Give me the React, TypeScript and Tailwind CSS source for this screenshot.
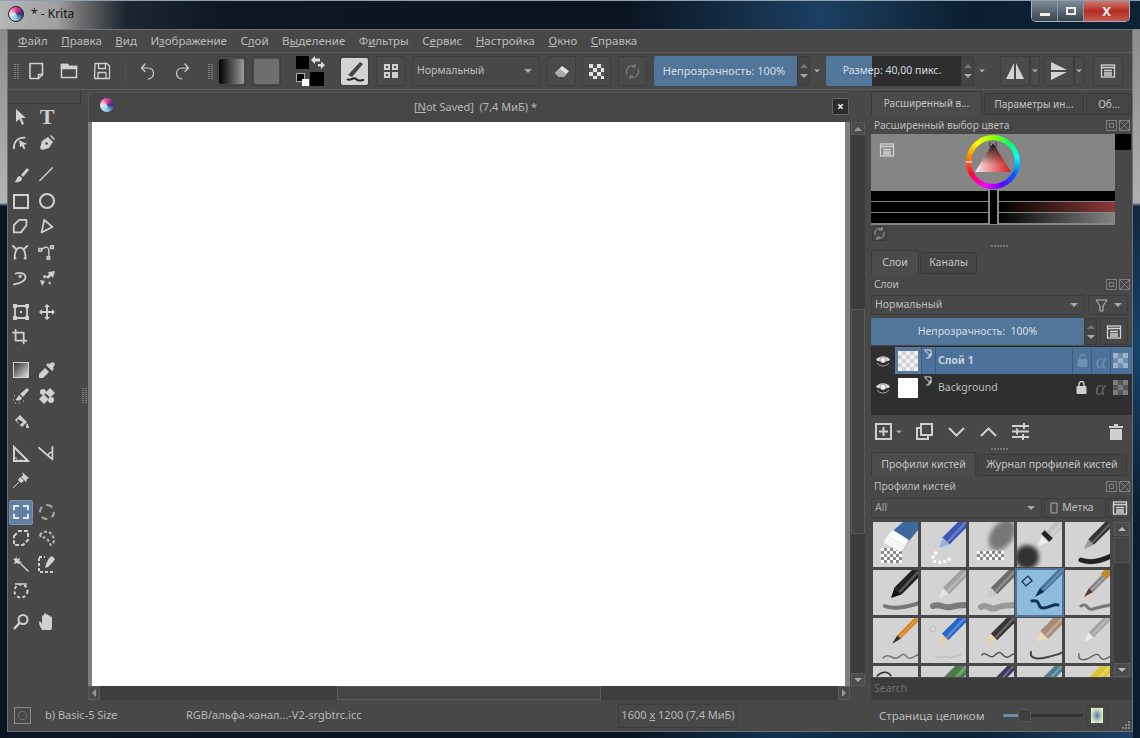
import { ReactNode } from "react"

const FONT = "font-['Noto_Sans','Open_Sans',sans-serif]"

const menu: [string, string, string][] = [
  ["", "Ф", "айл"],
  ["", "П", "равка"],
  ["", "В", "ид"],
  ["И", "з", "ображение"],
  ["С", "л", "ой"],
  ["В", "ы", "деление"],
  ["Ф", "и", "льтры"],
  ["С", "е", "рвис"],
  ["", "Н", "астройка"],
  ["", "О", "кно"],
  ["", "С", "правка"],
]

const Ic = ({ children, size = 20, box = 20 }: { children: ReactNode; size?: number; box?: number }) => (
  <svg width={size} height={size} viewBox={`0 0 ${box} ${box}`} fill="none" stroke="#d0d0d0" strokeWidth={1.6} strokeLinecap="round" strokeLinejoin="round">
    {children}
  </svg>
)

const Tool = ({ children, active }: { children?: ReactNode; active?: boolean }) => (
  <div className="w-[26px] h-[26px] flex items-center justify-center">
    <div className={`w-[24px] h-[25px] flex items-center justify-center rounded-[2px] ${active ? "bg-[#637f9f] border border-[#7b93ae]" : ""}`}>{children}</div>
  </div>
)

const Handle = ({ className = "" }: { className?: string }) => (
  <div className={`grid grid-cols-2 gap-[1px] w-[5px] ${className}`}>
    {Array.from({ length: 16 }).map((_, i) => (
      <div key={i} className="w-[2px] h-[1px] bg-[#7a7a7a]" />
    ))}
  </div>
)

const Dots = () => (
  <div className="flex justify-center gap-[1px] h-[2px]">
    {Array.from({ length: 6 }).map((_, i) => (
      <div key={i} className="w-[2px] h-[2px] bg-[#777]" />
    ))}
  </div>
)

const Caret = ({ className = "" }: { className?: string }) => (
  <div className={`w-0 h-0 border-l-[4px] border-r-[4px] border-t-[4px] border-l-transparent border-r-transparent border-t-[#a8a8a8] ${className}`} />
)

const Spin = ({ className = "" }: { className?: string }) => (
  <div className={`flex flex-col items-center justify-center gap-[6px] rounded-[2px] border border-[#3c3c3c] bg-[#444] ${className}`}>
    <div className="w-0 h-0 border-l-[4px] border-r-[4px] border-b-[4px] border-l-transparent border-r-transparent border-b-[#777]" />
    <Caret />
  </div>
)

const TBtn = ({ children, className = "" }: { children?: ReactNode; className?: string }) => (
  <div className={`h-[30px] w-[29px] shrink-0 flex items-center justify-center rounded-[2px] border border-[#3d3d3d] bg-[#4a4a4a] ${className}`}>{children}</div>
)

const Tab = ({ label, active, className = "" }: { label: string; active?: boolean; className?: string }) => (
  <div className={`flex items-center justify-center rounded-t-[3px] border border-[#3a3a3a] text-[#c4c4c4] whitespace-nowrap ${active ? "h-[24px] bg-[#4b4b4b] border-b-0" : "h-[22px] mt-[2px] bg-[#444]"} ${className}`}>
    {label}
  </div>
)

const DockTitle = ({ title }: { title: string }) => (
  <div className="h-[17px] flex items-center justify-between pl-[3px] pr-[1px] text-[10.2px] text-[#bdbdbd]">
    <span>{title}</span>
    <div className="flex">
      <svg width="13" height="13" viewBox="0 0 13 13" fill="none" stroke="#7d7d7d">
        <rect x="1.5" y="1.5" width="10" height="10" />
        <rect x="4.5" y="4.5" width="4" height="4" />
      </svg>
      <svg width="13" height="13" viewBox="0 0 13 13" fill="none" stroke="#7d7d7d">
        <rect x="1.5" y="1.5" width="10" height="10" />
        <path d="M1.5 1.5l10 10M11.5 1.5l-10 10" />
      </svg>
    </div>
  </div>
)

const ListIcon = () => (
  <svg width="16" height="16" viewBox="0 0 16 16" fill="none" stroke="#d4d4d4" strokeWidth="1.3">
    <rect x="1.5" y="2" width="13" height="12" />
    <path d="M1.5 4.5h13M4 7.5h8M4 10h8M4 12h8" />
  </svg>
)

const Checker = ({ size, cell = 4, dark = "#555", light = "#bbb" }: { size: number; cell?: number; dark?: string; light?: string }) => {
  const n = Math.ceil(size / cell)
  return (
    <svg width={size} height={size} viewBox={`0 0 ${size} ${size}`}>
      {Array.from({ length: n * n }).map((_, i) => {
        const x = i % n
        const y = Math.floor(i / n)
        return <rect key={i} x={x * cell} y={y * cell} width={cell} height={cell} fill={(x + y) % 2 ? dark : light} />
      })}
    </svg>
  )
}

type TileDef = { tx: number; ty: number; w: number; body: string; cone: string; stroke?: string; sc?: string; sw?: number; extra?: ReactNode; top?: ReactNode; bg?: string }

const checkerBlob = (x: number, y: number, n: number, m: number) =>
  Array.from({ length: n * m }).map((_, i) => {
    const cx = i % n
    const cy = Math.floor(i / n)
    return <rect key={i} x={x + cx * 3} y={y + cy * 3} width="3" height="3" fill={(cx + cy) % 2 ? "#8a8a8a" : "#fff"} />
  })

const tiles: TileDef[] = [
  {
    tx: 22, ty: 14, w: 0, body: "#3f689c", cone: "#3f689c",
    extra: <>{checkerBlob(8, 26, 7, 5)}</>,
    top: (
      <>
        <polygon points="14,14 30,0 45,0 45,8 32,24" fill="#3f689c" />
        <polygon points="14,14 32,24 27,30 11,21" fill="#f6f6f6" />
        <polygon points="14,14 20,8 36,18 32,24" fill="#fff" />
      </>
    ),
  },
  { tx: 18, ty: 26, w: 10, body: "#3a57b4", cone: "#9db4dd", extra: <path d="M16 30c-5 3-6 9 0 10s12-1 14-5" stroke="#fff" strokeWidth="3" strokeDasharray="3 2" fill="none" /> },
  {
    tx: 0, ty: 0, w: 0, body: "#6f6f6f", cone: "#6f6f6f",
    extra: (
      <>
        {checkerBlob(8, 29, 9, 3)}
        <ellipse cx="33" cy="13" rx="11" ry="17" fill="#777" transform="rotate(35 33 13)" filter="url(#tileBlur)" />
      </>
    ),
  },
  {
    tx: 21, ty: 24, w: 9, body: "#c2c2c2", cone: "#eee",
    extra: <circle cx="10" cy="35" r="12" fill="#333" filter="url(#tileBlur)" />,
    top: <path d="M26 10l8 8" stroke="#222" strokeWidth="5" />,
  },
  { tx: 19, ty: 27, w: 8, body: "#333", cone: "#999", stroke: "M16 38c8 3 18 2 30-4", sc: "#222", sw: 5 },
  { tx: 18, ty: 28, w: 10, body: "#222", cone: "#111", stroke: "M12 36c10 4 22 1 34-3", sc: "#777", sw: 4 },
  { tx: 18, ty: 28, w: 9, body: "#a2a2a2", cone: "#e4e4e4", stroke: "M12 36c7-3 11 3 18 1s10-2 16-2", sc: "#7b7b7b", sw: 6 },
  { tx: 18, ty: 28, w: 9, body: "#6c6c6c", cone: "#c8c8c8", stroke: "M12 37c6-4 9 4 15 1s9-2 19-3", sc: "#999", sw: 6 },
  { tx: 18, ty: 27, w: 6, body: "#41749f", cone: "#0e2b50", bg: "#8fbcdc", stroke: "M15 31c10-2 4 8 12 7s8-4 14-3", sc: "#123257", sw: 3, extra: <rect x="6" y="8" width="8" height="6" fill="none" stroke="#123257" strokeWidth="1.3" transform="rotate(-40 10 11)" /> },
  { tx: 19, ty: 27, w: 6, body: "#888", cone: "#5a3b30", stroke: "M16 36c8-4 4 5 12 3s10-3 18-4", sc: "#777", sw: 3, top: <rect x="38" y="-2" width="8" height="10" fill="#c08a30" transform="rotate(45 42 3)" /> },
  { tx: 19, ty: 26, w: 5, body: "#d48420", cone: "#333", stroke: "M10 40c6-6 9 2 14 0s6-6 9-2 6 2 13-2", sc: "#777", sw: 1.5 },
  { tx: 17, ty: 26, w: 9, body: "#2766c9", cone: "#e3cfa8", stroke: "M14 38c4 4 9-2 12 1s8-2 14-2", sc: "#c0c0c0", sw: 1.5, extra: <circle cx="12" cy="11" r="3" fill="none" stroke="#bbb" /> },
  { tx: 18, ty: 26, w: 9, body: "#3a3535", cone: "#e3d5b5", stroke: "M13 37c3-5 8 5 12 1s6-5 9-1 6 2 12-2", sc: "#555", sw: 1.5 },
  { tx: 20, ty: 24, w: 11, body: "#a58c78", cone: "#e9dcb9", stroke: "M14 34c-2 8 10 7 17 5s10-2 15-5", sc: "#444", sw: 2 },
  { tx: 19, ty: 24, w: 7, body: "#a5a5a5", cone: "#ececec", stroke: "M14 36c-2 8 8 6 12 3s7-4 9 0 6 2 11-1", sc: "#666", sw: 1.5 },
  { tx: 16, ty: 60, w: 8, body: "#555", cone: "#333", stroke: "M4 10c6-6 12-4 14 0", sc: "#333", sw: 1.5 },
  { tx: 16, ty: 28, w: 14, body: "#4c7a4c", cone: "#4c7a4c" },
  { tx: 16, ty: 28, w: 8, body: "#3b3b55", cone: "#3b3b55" },
  { tx: 16, ty: 28, w: 9, body: "#4d7d86", cone: "#4d7d86" },
  { tx: 16, ty: 28, w: 12, body: "#d8c530", cone: "#d8c530" },
]

const Tile = ({ t, selected }: { t: TileDef; selected?: boolean }) => {
  const bx = t.tx + 7
  const by = t.ty - 7
  const h = (t.w / 2) * 0.7
  return (
    <div className={`w-[45px] h-[45px] shrink-0 ${selected ? "outline-2 outline-[#4f7399]" : ""}`}>
      <svg width="45" height="45" viewBox="0 0 45 45" className={t.bg ? "bg-[#8fbcdc]" : "bg-[#d3d3d3]"}>
        <defs>
          <filter id="tileBlur" x="-30%" y="-30%" width="160%" height="160%">
            <feGaussianBlur stdDeviation="2" />
          </filter>
        </defs>
        {t.extra}
        {t.stroke && <path d={t.stroke} stroke={t.sc} strokeWidth={t.sw} fill="none" strokeLinecap="round" />}
        {t.w > 0 && (
          <>
            <path d={`M${bx} ${by}L${bx + 45} ${by - 45}`} stroke={t.body} strokeWidth={t.w} />
            <path d={`M${bx + h / 2} ${by + h / 2 - 1}L${bx + 45} ${by - 46}`} stroke="#fff" strokeOpacity="0.25" strokeWidth={t.w / 4} />
            <polygon points={`${t.tx},${t.ty} ${bx + h},${by + h} ${bx - h},${by - h}`} fill={t.cone} />
          </>
        )}
        {t.top}
      </svg>
    </div>
  )
}

const LayerRow = ({ name, active, lock, children }: { name: string; active?: boolean; lock: string; children: ReactNode }) => (
  <div className="h-[27px] flex items-center">
    <div className="w-[24px] flex justify-center">
      <svg width="16" height="14" viewBox="0 0 16 14">
        <path d="M1 6c3-5 11-5 14 0-3 2-11 2-14 0z" fill="#ddd" />
        <circle cx="8" cy="6" r="3" fill="#eee" stroke="#555" strokeWidth="0.5" />
        <path d="M2 9c3 4 9 4 12 0" stroke="#aaa" fill="none" />
      </svg>
    </div>
    <div className={`flex-1 h-full flex items-center pr-[2px] ${active ? "bg-[#4d7299]" : ""}`}>
      <div className={`w-[26px] h-full flex items-center justify-center ${active ? "bg-[#5a7a9b]" : ""}`}>{children}</div>
      <div className={`w-[15px] h-full flex justify-center pt-[2px] ${active ? "border-x border-[#3d5c7c]" : ""}`}>
        <svg width="11" height="11" viewBox="0 0 11 11" fill="none" stroke="#ddd">
          <path d="M1 1h7v4l-2 4H3M2 2l6 5M8 4v3H5" />
        </svg>
      </div>
      <span className={`ml-[2px] flex-1 text-[10.5px] ${active ? "font-bold text-[#c8d4e0]" : "text-[#bbb]"}`}>{name}</span>
      <div className={`w-[19px] h-full flex items-center justify-center ${active ? "border-l border-[#3d5c7c]" : ""}`}>
        <svg width="11" height="13" viewBox="0 0 11 13">
          <rect x="0.5" y="5" width="10" height="8" rx="1" fill={lock} />
          <path d={active ? "M3 5V3a2.5 2.5 0 0 1 5 0" : "M3 5V3a2.5 2.5 0 0 1 5 0v2"} stroke={lock} strokeWidth="1.4" fill="none" />
        </svg>
      </div>
      <div className={`w-[19px] h-full flex items-center justify-center italic font-['Liberation_Serif',serif] text-[20px] leading-none ${active ? "border-l border-[#3d5c7c] text-[#6f8fb0]" : "text-[#666]"}`}>α</div>
      <div className={`w-[20px] h-full flex items-center justify-center ${active ? "border-l border-[#3d5c7c]" : ""}`}>
        {active ? <Checker size={15} cell={5} dark="#6f8fb0" light="#9cb3c9" /> : <Checker size={15} cell={5} dark="#555" light="#7a7a7a" />}
      </div>
    </div>
  </div>
)

const ScrollBtn = ({ children, className = "" }: { children: ReactNode; className?: string }) => (
  <div className={`flex items-center justify-center bg-[#4b4b4b] border border-[#5a5a5a] ${className}`}>{children}</div>
)

export default function App() {
  return (
    <div className={`w-[1140px] h-[738px] flex flex-col overflow-hidden ${FONT} bg-[linear-gradient(90deg,#0d1622_0%,#0a1420_55%,#10314f_68%,#0b2136_85%,#1d4368_100%)] text-[#c8c8c8]`}>
      {/* title bar */}
      <div className="h-[29px] shrink-0 flex items-start border-t border-[#8fa0b0] bg-[linear-gradient(90deg,#b5b5b5_0%,#a0a0a0_5%,#6f6f6f_7%,#1d2630_11%,#0d1724_20%,#0b1522_55%,#1b4062_72%,#0c1e30_85%,#0e2235_100%)]">
        <div className="w-[16px] h-[16px] ml-[8px] mt-[5px] rounded-full bg-[conic-gradient(#e23d9a,#3f2b7a,#7fd5ea,#e9e9e9,#e23d9a)] border border-[#222]" />
        <span className="ml-[7px] mt-[6px] text-[12px] leading-[14px] text-[#161616]">* - Krita</span>
        <div className="ml-auto mr-[10px] h-[21px] flex rounded-b-[5px] border border-t-0 border-[#a5b2bf] overflow-hidden">
          <div className="w-[26px] flex items-center justify-center border-r border-[#8596a5] bg-[linear-gradient(#7d8a96,#3a4550)]">
            <div className="w-[10px] h-[3px] mt-[6px] bg-[#eee]" />
          </div>
          <div className="w-[26px] flex items-center justify-center border-r border-[#8596a5] bg-[linear-gradient(#7d8a96,#3a4550)]">
            <div className="w-[10px] h-[8px] border-2 border-[#eee]" />
          </div>
          <div className="w-[45px] flex items-center justify-center bg-[linear-gradient(#d07a70,#b52c20_50%,#c65a4e)]">
            <span className="text-[13px] font-bold leading-none text-[#f2f2f2]">X</span>
          </div>
        </div>
      </div>

      <div className="flex-1 flex min-h-0">
        <div className="w-[7px] shrink-0 bg-[linear-gradient(180deg,#8c8c8c_0%,#b5b5b5_24.5%,#0a1420_25%)]" />

        {/* main window */}
        <div className="flex-1 mb-[6px] flex flex-col min-w-0 bg-[#484848] border border-[#6c7278]">
          {/* menu */}
          <div className="h-[23px] shrink-0 flex items-center gap-[13.5px] pl-[10px] text-[11.5px] text-[#bcbcbc] border-b border-[#5c5c5c]">
            {menu.map(([a, b, c]) => (
              <span key={a + b + c} className="whitespace-nowrap">
                {a}
                <span className="underline">{b}</span>
                {c}
              </span>
            ))}
          </div>

          {/* toolbar */}
          <div className="h-[37px] shrink-0 flex items-center border-b border-[#5c5c5c] pl-[6px]">
            <Handle />
            <div className="ml-[7px] flex items-center gap-[13px]">
              <Ic size={20}>
                <path d="M4 2.5h12.5v11l-4 4H4z" />
                <path d="M12.5 17.5v-4h4" />
              </Ic>
              <svg width="20" height="20" viewBox="0 0 20 20" fill="none" stroke="#d0d0d0" strokeWidth="1.5">
                <path d="M2.5 3.5h6l1.5 2h7.5v11h-15z" />
                <path d="M2.5 3.5h6l1.5 2h7.5v2h-15z" fill="#d0d0d0" />
              </svg>
              <Ic size={20}>
                <path d="M3 2.5h12l2.5 2.5v12.5h-15z" strokeWidth="1.3" />
                <path d="M6.5 2.5v5h7v-5M6 17.5v-6h8v6" strokeWidth="1.3" />
              </Ic>
            </div>
            <div className="w-[1px] h-[24px] ml-[13px] mr-[12px] bg-[#505050]" />
            <div className="flex items-center gap-[14px]">
              <Ic size={20}>
                <path d="M7 3 3.5 7 7 10.5" strokeWidth="1.2" />
                <path d="M3.5 7h6c4 0 6 2.5 6 5.5S13 18 10 18" strokeWidth="1.2" />
              </Ic>
              <Ic size={20}>
                <path d="M13 3l3.5 4L13 10.5" strokeWidth="1.2" />
                <path d="M16.5 7h-6c-4 0-6 2.5-6 5.5S7 18 10 18" strokeWidth="1.2" />
              </Ic>
            </div>
            <Handle className="ml-[16px]" />
            <TBtn className="ml-[4px]">
              <div className="w-[25px] h-[25px] rounded-[2px] bg-[linear-gradient(90deg,#000,#9a9a9a)]" />
            </TBtn>
            <TBtn className="ml-[6px]">
              <div className="w-[25px] h-[25px] rounded-[2px] bg-[#6e6e6e]" />
            </TBtn>
            <div className="ml-[15px] w-[29px] h-[30px] grid grid-cols-2 grid-rows-2">
              <div className="w-[13px] h-[13px] bg-black" />
              <svg width="14" height="14" viewBox="0 0 14 14" fill="#ddd">
                <path d="M0 4l4-4v2.5h5V5.5H4V8zM14 9l-4 4v-2.5H7V8h3V5.5z" />
              </svg>
              <div className="relative w-[13px] h-[13px] self-end">
                <div className="w-[9px] h-[9px] bg-black border border-[#aaa]" />
                <div className="absolute right-0 bottom-0 w-[7px] h-[7px] bg-white" />
              </div>
              <div className="w-[14px] h-[14px] ml-[-1px] self-end bg-black" />
            </div>
            <TBtn className="ml-[15px]">
              <svg width="27" height="27" viewBox="0 0 27 27" className="bg-[#d3d3d3] rounded-[2px]">
                <path d="M7 17 19 4l3 2-11 13z" fill="#444" />
                <path d="M6 21c4 3 6-3 9 0s5 1 8 1" stroke="#222" strokeWidth="2" fill="none" />
              </svg>
            </TBtn>
            <TBtn className="ml-[7px]">
              <svg width="18" height="18" viewBox="0 0 18 18" fill="#cfcfcf">
                <rect x="2" y="2" width="6" height="6" />
                <rect x="10" y="2" width="6" height="6" />
                <rect x="2" y="10" width="6" height="6" />
                <rect x="10" y="10" width="6" height="6" />
                <path d="M4 4h2v2H4zM12 4h2v2h-2zM4 12h2v2H4z" fill="#484848" />
              </svg>
            </TBtn>
            <div className="ml-[7px] h-[30px] w-[128px] shrink-0 flex items-center justify-between px-[4px] pr-[7px] rounded-[2px] border border-[#3d3d3d] text-[10.5px] text-[#bdbdbd]">
              Нормальный
              <Caret />
            </div>
            <TBtn className="ml-[7px]">
              <svg width="18" height="18" viewBox="0 0 18 18">
                <path d="M2 11 9 4l7 5-5 6H6z" fill="#e0e0e0" />
                <path d="M2 11l4 4h5l2.5-3L7 7z" fill="#aaa" />
              </svg>
            </TBtn>
            <TBtn className="ml-[6px]">
              <Checker size={15} cell={4} dark="#555" light="#e4e4e4" />
            </TBtn>
            <TBtn className="ml-[7px]">
              <svg width="17" height="17" viewBox="0 0 17 17" fill="none" stroke="#8a8a8a" strokeWidth="1">
                <path d="M3 11a6 6 0 0 1 8-8M14 6a6 6 0 0 1-8 8" />
                <path d="M11 1v3H8M6 16v-3h3" />
              </svg>
            </TBtn>

            {/* sliders */}
            <div className="ml-[7px] h-[30px] w-[143px] shrink-0 flex items-center justify-center pr-[3px] rounded-l-[2px] bg-[#527699] text-[11px] text-[#d5dde5]">Непрозрачность: 100%</div>
            <Spin className="h-[30px] w-[13px] shrink-0" />
            <Caret className="ml-[3px] scale-75" />
            <div className="ml-[5px] h-[30px] w-[135px] shrink-0 flex items-center justify-center pr-[3px] rounded-l-[2px] text-[10.5px] text-[#d5dde5] bg-[linear-gradient(90deg,#527699_34%,#2e2e2e_34%)]">Размер: 40,00 пикс.</div>
            <Spin className="h-[30px] w-[13px] shrink-0" />
            <Caret className="ml-[4px] scale-75" />

            <TBtn className="ml-[14px] !w-[30px]">
              <svg width="22" height="22" viewBox="0 0 22 22" fill="#d4d4d4">
                <path d="M10 3v16H2zM12 3v16h8z" />
              </svg>
            </TBtn>
            <TBtn className="!w-[10px]">
              <Caret className="scale-75" />
            </TBtn>
            <TBtn className="ml-[4px] !w-[30px]">
              <svg width="22" height="22" viewBox="0 0 22 22" fill="#d4d4d4">
                <path d="M3 2l16 8H3zM3 12h16L3 20z" />
              </svg>
            </TBtn>
            <TBtn className="!w-[10px]">
              <Caret className="scale-75" />
            </TBtn>
            <TBtn className="ml-[9px] !w-[30px]">
              <ListIcon />
            </TBtn>
          </div>

          {/* body */}
          <div className="flex-1 flex min-h-0">
            {/* toolbox */}
            <div className="w-[73px] shrink-0">
              <div className="h-[14px] border-b border-r border-[#393939]" />
              <div className="flex flex-col">
                <div className="grid grid-cols-[26px_26px]">
                  <Tool>
                    <svg width="14" height="18" viewBox="0 0 14 18" fill="#d0d0d0">
                      <path d="M2 1l10 9H7.5l2.500 6-2 1-2.500-6L2 14z" />
                    </svg>
                  </Tool>
                  <Tool>
                    <span className="font-['Liberation_Serif',serif] font-bold text-[22px] leading-none text-[#d0d0d0]">T</span>
                  </Tool>
                  <Tool>
                    <Ic size={18}>
                      <path d="M2 16c0-7 4-12 12-12" strokeWidth="2" />
                      <path d="M8 7l9 4-4 1 2 4-2 1-2-4-2 2z" fill="#d0d0d0" stroke="none" />
                    </Ic>
                  </Tool>
                  <Tool>
                    <svg width="18" height="18" viewBox="0 0 18 18" fill="#d0d0d0">
                      <path d="M10 3l5 5-4 6-7 2-2-2 2-7z" />
                      <path d="M13 1l4 4-1 1-4-4z" />
                      <circle cx="8.5" cy="9.5" r="1.3" fill="#484848" />
                    </svg>
                  </Tool>
                </div>
                <div className="mt-[6px] grid grid-cols-[26px_26px]">
                  <Tool>
                    <svg width="18" height="18" viewBox="0 0 18 18" fill="#d0d0d0">
                      <path d="M9 9l6-7 2 2-6 7zM2 16c3 0 2-6 6-6l2 2c0 4-5 5-8 4z" />
                    </svg>
                  </Tool>
                  <Tool>
                    <Ic size={18}>
                      <path d="M2 16 16 2" />
                    </Ic>
                  </Tool>
                  <Tool>
                    <div className="w-[16px] h-[15px] border-2 border-[#d0d0d0]" />
                  </Tool>
                  <Tool>
                    <div className="w-[16px] h-[16px] rounded-full border-2 border-[#d0d0d0]" />
                  </Tool>
                  <Tool>
                    <Ic size={18}>
                      <path d="M2 8l6-6h8v6l-6 8H2z" strokeWidth="2" />
                    </Ic>
                  </Tool>
                  <Tool>
                    <Ic size={18}>
                      <path d="M7 2l9 8-12 6z" strokeWidth="2" />
                    </Ic>
                  </Tool>
                  <Tool>
                    <Ic size={18}>
                      <path d="M3 16c0-9 3-12 6-12s6 3 6 12" strokeWidth="2" />
                      <path d="M1 2l3 3M17 2l-3 3M3 16h1M15 16h-1" strokeWidth="2" />
                    </Ic>
                  </Tool>
                  <Tool>
                    <Ic size={18}>
                      <path d="M4 6c4-3 8-4 8 2v7" />
                      <rect x="1" y="5" width="3" height="3" />
                      <rect x="14" y="2" width="3" height="3" />
                      <rect x="10" y="14" width="3" height="3" />
                    </Ic>
                  </Tool>
                  <Tool>
                    <Ic size={18}>
                      <path d="M4 4c5-2 11 0 11 4S9 15 2 16" strokeWidth="1.8" />
                      <circle cx="9" cy="7" r="1" fill="#d0d0d0" />
                    </Ic>
                  </Tool>
                  <Tool>
                    <svg width="18" height="18" viewBox="0 0 18 18" fill="#d0d0d0">
                      <path d="M10 2l7-1-2 7-2-2-3 3-2-2 3-3zM5 5l4 1-3 3zM12 11l1 4-3-2zM2 10l5 1-3 5z" />
                    </svg>
                  </Tool>
                </div>
                <div className="mt-[7px] grid grid-cols-[26px_26px]">
                  <Tool>
                    <svg width="18" height="18" viewBox="0 0 18 18" fill="#d0d0d0">
                      <path d="M3 3h12v12H3z" fill="none" stroke="#d0d0d0" strokeWidth="1.8" />
                      <path d="M1 1h4v4H1zM13 1h4v4h-4zM1 13h4v4H1zM13 13h4v4h-4zM8 8h2v2H8z" />
                    </svg>
                  </Tool>
                  <Tool>
                    <svg width="18" height="18" viewBox="0 0 18 18" fill="#d0d0d0">
                      <path d="M9 1l3 3h-2v4h4V6l3 3-3 3v-2h-4v4h2l-3 3-3-3h2v-4H4v2L1 9l3-3v2h4V4H6z" />
                    </svg>
                  </Tool>
                  <Tool>
                    <Ic size={18}>
                      <path d="M4 1v12h12M1 4h12v12" strokeWidth="2" />
                    </Ic>
                  </Tool>
                  <Tool />
                </div>
                <div className="mt-[6px] grid grid-cols-[26px_26px]">
                  <Tool>
                    <div className="w-[16px] h-[16px] border border-[#d0d0d0] bg-[linear-gradient(135deg,#333,#ddd)]" />
                  </Tool>
                  <Tool>
                    <svg width="18" height="18" viewBox="0 0 18 18" fill="#d0d0d0">
                      <path d="M11 3l4-2 2 2-2 4 1 1-2 2-6-6 2-2zM7 7l4 4-6 6H1v-4z" />
                    </svg>
                  </Tool>
                  <Tool>
                    <svg width="18" height="18" viewBox="0 0 18 18" fill="#d0d0d0">
                      <path d="M15 1l2 2-6 7-3-3zM7 8l3 3c-1 3-5 3-6 2s1-1 3-5z" />
                      <path d="M2 9h1M1 13h1M3 16h1M7 16h1M11 14h1" stroke="#d0d0d0" />
                    </svg>
                  </Tool>
                  <Tool>
                    <svg width="18" height="18" viewBox="0 0 18 18" fill="#d0d0d0">
                      <path d="M12 1l5 5-11 11-5-5z" />
                      <circle cx="5" cy="5" r="3" />
                      <circle cx="13" cy="13" r="3" />
                      <path d="M7 7l4 4" stroke="#484848" strokeWidth="2" />
                    </svg>
                  </Tool>
                  <Tool>
                    <svg width="18" height="18" viewBox="0 0 18 18" fill="#d0d0d0">
                      <path d="M8 2l7 7-5 5-7-7zM15 10c1 2 2 3 2 5h-3c0-2 0-3 1-5z" />
                      <path d="M6 6l5 3-3 3-3-4z" fill="#484848" />
                    </svg>
                  </Tool>
                  <Tool />
                </div>
                <div className="mt-[6px] grid grid-cols-[26px_26px]">
                  <Tool>
                    <svg width="18" height="18" viewBox="0 0 18 18" fill="none" stroke="#d0d0d0" strokeWidth="2">
                      <path d="M2 2v14h14z" />
                      <path d="M2 13h3M5 16v-2M9 16v-2" strokeWidth="1" />
                    </svg>
                  </Tool>
                  <Tool>
                    <Ic size={18}>
                      <path d="M1 3l15 13V2" strokeWidth="2" />
                      <path d="M11 11a5 5 0 0 1 4-3" />
                    </Ic>
                  </Tool>
                  <Tool>
                    <svg width="18" height="18" viewBox="0 0 18 18" fill="#d0d0d0">
                      <path d="M10 1l7 6-2 1-1 3-5-5 2-2zM8 6l4 4-3 2-3-3z" />
                      <path d="M1 17l6-6" stroke="#d0d0d0" />
                    </svg>
                  </Tool>
                  <Tool />
                </div>
                <div className="mt-[6px] grid grid-cols-[26px_26px]">
                  <Tool active>
                    <div className="w-[16px] h-[14px] border-2 border-dashed border-[#dfe5ec]" />
                  </Tool>
                  <Tool>
                    <div className="w-[16px] h-[16px] rounded-full border-2 border-dashed border-[#aaa]" />
                  </Tool>
                  <Tool>
                    <svg width="18" height="18" viewBox="0 0 18 18" fill="none" stroke="#d0d0d0" strokeWidth="2" strokeDasharray="4 2">
                      <path d="M2 7l5-5h9v9l-5 5H2z" />
                    </svg>
                  </Tool>
                  <Tool>
                    <svg width="18" height="18" viewBox="0 0 18 18" fill="none" stroke="#bbb" strokeWidth="2" strokeDasharray="3 2">
                      <path d="M2 6c3-5 13-5 14 5 0 3-2 5-3 5s-2-5-5-7-4 2-6-3z" />
                    </svg>
                  </Tool>
                  <Tool>
                    <svg width="18" height="18" viewBox="0 0 18 18" fill="#d0d0d0">
                      <path d="M4 1l1 3 3-1-1 3 3 1-3 2-2-1-3 1 1-3-2-2 3-1zM8 9l1-1 8 8-1 1z" />
                    </svg>
                  </Tool>
                  <Tool>
                    <svg width="18" height="18" viewBox="0 0 18 18" fill="none" stroke="#d0d0d0" strokeWidth="2">
                      <path d="M1 3v14h14" strokeDasharray="3 2" />
                      <path d="M1 2h6" strokeDasharray="3 2" />
                      <path d="M11 3l3-2 3 3-2 3-5 5-3 1 1-4z" fill="#d0d0d0" stroke="none" />
                    </svg>
                  </Tool>
                  <Tool>
                    <svg width="18" height="18" viewBox="0 0 18 18" fill="none" stroke="#d0d0d0" strokeWidth="2">
                      <path d="M3 3h12" strokeWidth="1.5" />
                      <circle cx="9" cy="10" r="6.5" strokeDasharray="3 2.5" />
                    </svg>
                  </Tool>
                  <Tool />
                </div>
                <div className="mt-[6px] grid grid-cols-[26px_26px]">
                  <Tool>
                    <svg width="18" height="18" viewBox="0 0 18 18" fill="none" stroke="#d0d0d0" strokeWidth="2">
                      <circle cx="11" cy="6.5" r="4.5" />
                      <path d="M7.5 10 2 16" strokeWidth="2.5" />
                    </svg>
                  </Tool>
                  <Tool>
                    <svg width="18" height="20" viewBox="0 0 18 20" fill="#d0d0d0">
                      <path d="M4 18c-1-2-3-5-3-8 1-1 2 0 3 2V4c0-1 2-1 2 0V2c0-1 2-1 2 0v1c0-1 2-1 2 0v1c0-1 2-1 2 0v1c1-1 2 0 2 1v8c0 2 0 3-1 4z" />
                    </svg>
                  </Tool>
                </div>
              </div>
            </div>

            {/* splitter */}
            <div className="w-[7px] shrink-0 flex items-center justify-center">
              <Handle />
            </div>

            {/* canvas area */}
            <div className="w-[778px] shrink-0 flex flex-col pt-[2px]">
              <div className="flex-1 flex min-h-0">
                <div className="w-[762px] shrink-0 flex flex-col">
                  <div className="h-[30px] shrink-0 relative flex items-center justify-center rounded-t-[3px] border-l border-t border-[#555] bg-[#464646] text-[11px] text-[#b8b8b8]">
                    <div className="absolute left-[11px] top-[5px] w-[14px] h-[14px] rounded-full bg-[conic-gradient(#e23d9a,#3f2b7a,#7fd5ea,#e9e9e9,#e23d9a)]" />
                    <span className="ml-[12px]">
                      [<span className="underline">N</span>ot Saved]&nbsp; (7,4 МиБ) *
                    </span>
                    <div className="absolute right-[1px] top-[5px] w-[17px] h-[17px] rounded-[2px] bg-[#2b2b2b] border border-[#666] flex items-center justify-center">
                      <span className="text-[12px] font-bold leading-none text-[#eee]">×</span>
                    </div>
                  </div>
                  <div className="flex-1 flex min-h-0 bg-[#7f7f7f] pl-[4px] pr-[5px]">
                    <div className="flex-1 bg-white" />
                  </div>
                </div>
                <div className="w-[14px] shrink-0 ml-[1px] pt-[30px] flex flex-col">
                  <div className="flex-1 flex flex-col bg-[#3c3c3c]">
                    <ScrollBtn className="h-[13px]">
                      <div className="w-0 h-0 border-l-[4px] border-r-[4px] border-b-[4px] border-l-transparent border-r-transparent border-b-[#999]" />
                    </ScrollBtn>
                    <div className="mt-[174px] w-full h-[225px] bg-[#424242] border border-[#5a5a5a]" />
                    <ScrollBtn className="mt-auto h-[13px]">
                      <Caret className="border-t-[#999]" />
                    </ScrollBtn>
                  </div>
                </div>
              </div>
              <div className="h-[14px] shrink-0 mr-[16px] flex items-center bg-[#3e3e3e]">
                <ScrollBtn className="w-[12px] h-full">
                  <div className="w-0 h-0 border-y-[4px] border-r-[4px] border-y-transparent border-r-[#999]" />
                </ScrollBtn>
                <div className="ml-[237px] w-[264px] h-full bg-[#444] border border-[#5a5a5a]" />
                <ScrollBtn className="ml-auto w-[12px] h-full">
                  <div className="w-0 h-0 border-y-[4px] border-l-[4px] border-y-transparent border-l-[#999]" />
                </ScrollBtn>
              </div>
            </div>

            {/* dockers */}
            <div className="flex-1 min-w-0 ml-[5px] pt-[1px] flex flex-col">
              <div className="flex items-end gap-[2px]">
                <Tab label="Расширенный в..." active className="w-[111px] text-[10px]" />
                <Tab label="Параметры ин..." className="w-[100px] text-[10px]" />
                <Tab label="Об..." className="w-[46px] text-[10px]" />
              </div>
              <div className="mt-[2px]">
                <DockTitle title="Расширенный выбор цвета" />
              </div>
              <div className="flex h-[91px]">
                <div className="w-[244px] h-full flex flex-col bg-[#858585]">
                  <div className="h-[57px] relative">
                    <div className="absolute left-[8px] top-[8px]">
                      <ListIcon />
                    </div>
                    <div className="absolute left-[95px] top-[1px] w-[54px] h-[54px] rounded-full bg-[conic-gradient(#90ff00,#00ff60,#00ffff,#0060ff,#6000ff,#ff00ff,#ff0040,#ff8000,#ffff00,#90ff00)] flex items-center justify-center">
                      <div className="w-[44px] h-[44px] rounded-full bg-[#858585]" />
                    </div>
                    <div className="absolute left-[95px] top-[27px] w-[6px] h-[2px] bg-[#f2b0a8]" />
                    <svg className="absolute left-[103px] top-[8px]" width="38" height="32" viewBox="0 0 38 32">
                      <defs>
                        <linearGradient id="tr" x1="0" x2="1" y1="0" y2="0">
                          <stop offset="0" stopColor="#f8eeee" />
                          <stop offset="1" stopColor="#d81818" />
                        </linearGradient>
                        <linearGradient id="tb" x1="0" x2="0" y1="0" y2="1">
                          <stop offset="0" stopColor="#1c0808" />
                          <stop offset="0.75" stopColor="#1c0808" stopOpacity="0" />
                        </linearGradient>
                      </defs>
                      <polygon points="19,1 37,30 1,30" fill="url(#tr)" />
                      <polygon points="19,1 37,30 1,30" fill="url(#tb)" />
                      <circle cx="19" cy="2.5" r="3.5" fill="none" stroke="#333" />
                    </svg>
                  </div>
                  <div className="flex-1 flex flex-col gap-[1px]">
                    {["bg-black", "bg-[linear-gradient(90deg,#000_52%,#8a3a3a_100%)]", "bg-[linear-gradient(90deg,#000_52%,#858585_100%)]"].map((c) => (
                      <div key={c} className={`h-[10px] relative ${c}`}>
                        <div className="absolute left-[117px] top-[-1px] w-[11px] h-[12px] bg-black border-x-2 border-[#8a8a8a]" />
                      </div>
                    ))}
                    <div className="h-[1px]" />
                  </div>
                </div>
                <div className="w-[16px] h-[16px] bg-black" />
              </div>
              <div className="h-[15px] mt-[1px] flex items-center">
                <div className="w-[15px] h-[15px] ml-[1px] rounded-[2px] border border-[#3a3a3a] flex items-center justify-center">
                  <svg width="13" height="13" viewBox="0 0 13 13" fill="none" stroke="#999">
                    <path d="M2 8a5 5 0 0 1 7-6M11 5a5 5 0 0 1-7 6" />
                    <path d="M9 0v3H6M4 13v-3h3" />
                  </svg>
                </div>
              </div>
              <div className="mt-[4px] mb-[3px] pr-[4px]">
                <Dots />
              </div>

              <div className="flex items-end gap-[1px]">
                <Tab label="Слои" active className="w-[48px] text-[10.5px]" />
                <Tab label="Каналы" className="w-[57px] text-[10.5px]" />
              </div>
              <div className="mt-[2px]">
                <DockTitle title="Слои" />
              </div>
              <div className="mt-[2px] flex gap-[3px]">
                <div className="w-[214px] h-[20px] flex items-center justify-between pl-[3px] pr-[6px] rounded-[2px] border border-[#3d3d3d] text-[10.5px] text-[#bdbdbd]">
                  Нормальный
                  <Caret />
                </div>
                <div className="w-[40px] h-[20px] flex items-center justify-center gap-[6px] rounded-[2px] border border-[#3d3d3d]">
                  <svg width="13" height="13" viewBox="0 0 13 13" fill="none" stroke="#bbb">
                    <path d="M1 1h11L8 7v5H5V7z" />
                  </svg>
                  <Caret />
                </div>
              </div>
              <div className="mt-[3px] flex">
                <div className="w-[213px] h-[27px] flex items-center justify-center rounded-l-[2px] bg-[#527699] text-[10.5px] text-[#d5dde5]">Непрозрачность:&nbsp; 100%</div>
                <Spin className="w-[13px] h-[27px]" />
                <div className="ml-[3px] w-[28px] h-[27px] flex items-center justify-center rounded-[2px] border border-[#3d3d3d]">
                  <ListIcon />
                </div>
              </div>
              <div className="mt-[1px] h-[70px] bg-[#2f2f2f] pt-[1px]">
                <LayerRow name="Слой 1" active lock="#6f8fb0">
                  <Checker size={20} cell={4} dark="#d0d0d0" light="#f2f2f2" />
                </LayerRow>
                <LayerRow name="Background" lock="#cfcfcf">
                  <div className="w-[20px] h-[20px] bg-white" />
                </LayerRow>
              </div>
              <div className="h-[30px] mt-[2px] flex items-center pl-[4px] pr-[9px]">
                <svg width="17" height="17" viewBox="0 0 17 17" fill="none" stroke="#cfcfcf" strokeWidth="2">
                  <rect x="1" y="1" width="15" height="15" />
                  <path d="M8.5 4v9M4 8.5h9" />
                </svg>
                <Caret className="ml-[3px] scale-75" />
                <svg className="ml-[13px]" width="17" height="17" viewBox="0 0 17 17" fill="none" stroke="#cfcfcf" strokeWidth="2">
                  <path d="M5 1h11v11H5zM5 5H1v11h11v-4" />
                </svg>
                <svg className="ml-[15px]" width="17" height="10" viewBox="0 0 17 10" fill="none" stroke="#cfcfcf" strokeWidth="2">
                  <path d="M1 1l7.5 7.5L16 1" />
                </svg>
                <svg className="ml-[15px]" width="17" height="10" viewBox="0 0 17 10" fill="none" stroke="#cfcfcf" strokeWidth="2">
                  <path d="M1 9l7.5-7.5L16 9" />
                </svg>
                <svg className="ml-[15px]" width="17" height="17" viewBox="0 0 17 17" fill="#cfcfcf">
                  <path d="M0 2h17v2H0zM0 7.5h17v2H0zM0 13h17v2H0zM11 0h2v6h-2zM4 5.5h2v6H4zM10 11h2v6h-2z" />
                </svg>
                <svg className="ml-auto" width="14" height="16" viewBox="0 0 14 16" fill="#cfcfcf">
                  <path d="M0 2h14v2H0zM5 0h4v2H5zM1 5h12v11H1z" />
                </svg>
              </div>
              <div className="mt-[2px] mb-[2px] pr-[4px]">
                <Dots />
              </div>

              <div className="flex items-end gap-[1px]">
                <Tab label="Профили кистей" active className="w-[105px] text-[10.5px]" />
                <Tab label="Журнал профилей кистей" className="w-[150px] text-[10.5px]" />
              </div>
              <div className="mt-[2px]">
                <DockTitle title="Профили кистей" />
              </div>
              <div className="mt-[3px] flex gap-[2px]">
                <div className="w-[172px] h-[20px] flex items-center justify-between pl-[3px] pr-[6px] rounded-[2px] border border-[#3d3d3d] text-[10.5px] text-[#a8a8a8]">
                  All
                  <Caret />
                </div>
                <div className="w-[62px] h-[20px] flex items-center pl-[5px] gap-[4px] rounded-[2px] border border-[#3d3d3d] text-[10.5px] text-[#bdbdbd]">
                  <svg width="8" height="12" viewBox="0 0 8 12" fill="none" stroke="#aaa">
                    <path d="M1 1h6v10H1z" />
                  </svg>
                  Метка
                </div>
                <div className="w-[24px] h-[20px] flex items-center justify-center rounded-[2px] border border-[#3d3d3d]">
                  <ListIcon />
                </div>
              </div>
              <div className="mt-[4px] flex">
                <div className="w-[240px] h-[155px] pl-[2px] overflow-hidden grid grid-cols-[repeat(5,45px)] gap-[3px] content-start">
                  {tiles.map((t, i) => (
                    <Tile key={i} t={t} selected={i === 8} />
                  ))}
                </div>
                <div className="ml-[3px] w-[16px] h-[155px] flex flex-col bg-[#3c3c3c]">
                  <ScrollBtn className="h-[14px]">
                    <div className="w-0 h-0 border-l-[4px] border-r-[4px] border-b-[4px] border-l-transparent border-r-transparent border-b-[#bbb]" />
                  </ScrollBtn>
                  <div className="h-[26px] mt-[1px] bg-[#444] border border-[#555]" />
                  <ScrollBtn className="mt-auto h-[14px]">
                    <Caret className="border-t-[#bbb]" />
                  </ScrollBtn>
                </div>
              </div>
              <div className="h-[22px] mt-[1px] flex items-center pl-[3px] bg-[#3c3c3c] text-[10.5px] text-[#707070]">Search</div>
            </div>
          </div>

          {/* status bar */}
          <div className="h-[31px] shrink-0 flex items-center text-[11px] text-[#b8b8b8]">
            <div className="ml-[6px] w-[17px] h-[17px] flex items-center justify-center border border-[#8a8a8a]">
              <div className="w-[9px] h-[9px] rounded-full border border-dotted border-[#999]" />
            </div>
            <span className="ml-[14px] w-[141px] shrink-0">b) Basic-5 Size</span>
            <span className="w-[432px] shrink-0">RGB/альфа-канал...-V2-srgbtrc.icc</span>
            <div className="w-[120px] h-[24px] shrink-0 flex items-center justify-center border border-[#3d3d3d]">
              1600&nbsp;<span className="underline">x</span>&nbsp;1200 (7,4 МиБ)
            </div>
            <span className="ml-[141px] text-[11.5px] whitespace-nowrap">Страница целиком</span>
            <div className="ml-[18px] w-[80px] h-[3px] relative rounded-full bg-[linear-gradient(90deg,#6d8dae_20%,#333_20%)]">
              <div className="absolute left-[15px] top-[-5px] w-[13px] h-[13px] rounded-[2px] bg-[#3f3f3f] border border-[#555]" />
            </div>
            <div className="ml-[3px] w-[22px] h-[22px] flex items-center justify-center rounded-[2px] border border-[#3d3d3d]">
              <div className="w-[12px] h-[15px] bg-[radial-gradient(#5577bb,#cde0b0_60%,#fff)]" />
            </div>
            <div className="ml-auto mr-[2px] self-end mb-[2px] grid grid-cols-3 gap-[1px]">
              {[0, 0, 1, 0, 1, 1, 1, 1, 1].map((v, i) => (
                <div key={i} className={`w-[2px] h-[2px] ${v ? "bg-[#888]" : ""}`} />
              ))}
            </div>
          </div>
        </div>

        <div className="w-[7px] shrink-0 bg-[linear-gradient(180deg,#8c8c8c_0%,#b0b0b0_24.5%,#12283e_25%,#16436b_45%,#0b1c2e_70%)]" />
      </div>
    </div>
  )
}
